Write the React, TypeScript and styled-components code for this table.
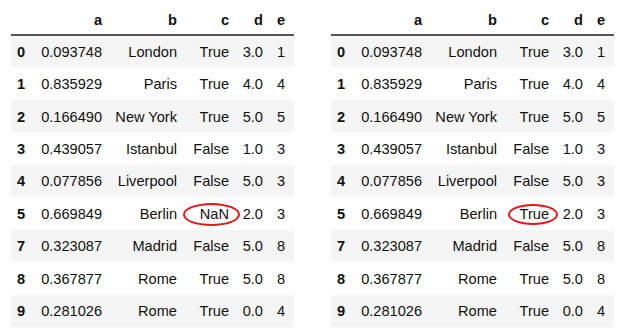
import styled, { createGlobalStyle } from 'styled-components'

type Row = [string, string, string, string, string, string]

const baseRows: Row[] = [
  ['0', '0.093748', 'London', 'True', '3.0', '1'],
  ['1', '0.835929', 'Paris', 'True', '4.0', '4'],
  ['2', '0.166490', 'New York', 'True', '5.0', '5'],
  ['3', '0.439057', 'Istanbul', 'False', '1.0', '3'],
  ['4', '0.077856', 'Liverpool', 'False', '5.0', '3'],
  ['5', '0.669849', 'Berlin', 'NaN', '2.0', '3'],
  ['7', '0.323087', 'Madrid', 'False', '5.0', '8'],
  ['8', '0.367877', 'Rome', 'True', '5.0', '8'],
  ['9', '0.281026', 'Rome', 'True', '0.0', '4'],
]

const filledRows: Row[] = baseRows.map(r => (r[0] === '5' ? [r[0], r[1], r[2], 'True', r[4], r[5]] : r))

const columns = ['a', 'b', 'c', 'd', 'e']
const widths = [21, 79, 75, 52, 34, 22]

type Mark = { left: number; top: number; width: number; height: number }

function Frame({ rows, mark }: { rows: Row[]; mark: Mark }) {
  return (
    <Table>
      <colgroup>
        {widths.map((w, i) => (
          <Col key={i} $w={w} />
        ))}
      </colgroup>
      <thead>
        <tr>
          <HeadCell />
          {columns.map(c => (
            <HeadCell key={c}>{c}</HeadCell>
          ))}
        </tr>
      </thead>
      <tbody>
        {rows.map(row => (
          <BodyRow key={row[0]}>
            <IndexCell>{row[0]}</IndexCell>
            {row.slice(1).map((v, i) => (
              <Cell key={i}>
                {v}
                {row[0] === '5' && i === 2 && (
                  <Circle $left={mark.left} $top={mark.top} $width={mark.width} $height={mark.height} />
                )}
              </Cell>
            ))}
          </BodyRow>
        ))}
      </tbody>
    </Table>
  )
}

export default function App() {
  return (
    <>
      <GlobalStyle />
      <Page>
        <Frame rows={baseRows} mark={{ left: -3, top: 6, width: 57, height: 23 }} />
        <Frame rows={filledRows} mark={{ left: 2, top: 7, width: 50, height: 21 }} />
      </Page>
    </>
  )
}

const GlobalStyle = createGlobalStyle`
  body {
    margin: 0;
    background: #fff;
    font-family: "Liberation Sans", Arial, sans-serif;
  }
`

const Page = styled.div`
  display: flex;
  gap: 37px;
  padding-left: 11px;
`

const Table = styled.table`
  table-layout: fixed;
  width: 283px;
  border-collapse: collapse;
  border-spacing: 0;
  font-size: 14.6px;
  color: #111;
`

const Col = styled.col<{ $w: number }>`
  width: ${p => p.$w}px;
`

const HeadCell = styled.th`
  height: 35px;
  padding: 0 9px 6px 0;
  box-sizing: border-box;
  text-align: right;
  vertical-align: bottom;
  font-weight: bold;
  border-bottom: 2px solid #555;
`

const BodyRow = styled.tr`
  height: 32.45px;

  &:nth-child(odd) {
    background: #f5f5f5;
  }
`

const IndexCell = styled.th`
  padding: 1px 0 0 6px;
  text-align: left;
  vertical-align: middle;
  font-weight: bold;
`

const Cell = styled.td`
  position: relative;
  padding: 1px 9px 0 0;
  text-align: right;
  vertical-align: middle;
  white-space: nowrap;
`

const Circle = styled.span<{ $left: number; $top: number; $width: number; $height: number }>`
  position: absolute;
  left: ${p => p.$left}px;
  top: ${p => p.$top}px;
  width: ${p => p.$width}px;
  height: ${p => p.$height}px;
  box-sizing: border-box;
  border: 2px solid #e3161c;
  border-radius: 50%;
  pointer-events: none;
`
